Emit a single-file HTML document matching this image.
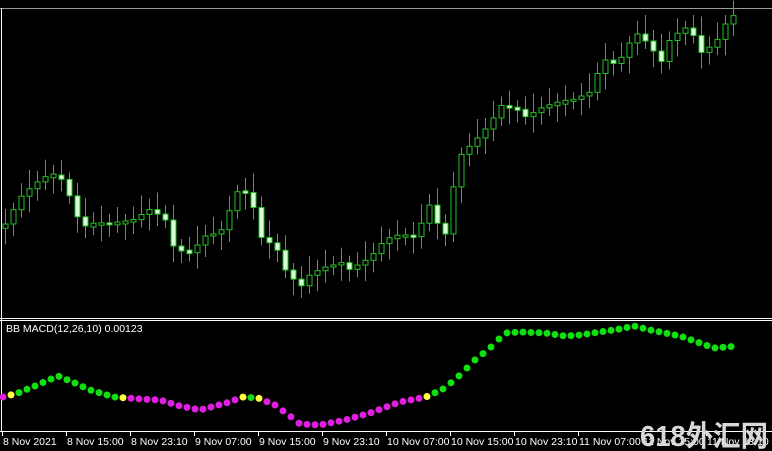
<!DOCTYPE html>
<html><head><meta charset="utf-8"><style>
html,body{margin:0;padding:0;background:#000;width:772px;height:451px;overflow:hidden}
svg{display:block}
text{font-family:"Liberation Sans",sans-serif;font-size:10.5px;fill:#fff}
</style></head><body>
<svg id="s" width="772" height="451" xmlns="http://www.w3.org/2000/svg">
<rect width="772" height="451" fill="#000"/>
<line x1="0" y1="8.5" x2="772" y2="8.5" stroke="#9a9a9a"/>
<line x1="1.5" y1="8" x2="1.5" y2="431" stroke="#fff"/>
<line x1="0" y1="318.5" x2="772" y2="318.5" stroke="#fff"/>
<line x1="0" y1="320.5" x2="772" y2="320.5" stroke="#fff"/>
<line x1="0" y1="431.5" x2="772" y2="431.5" stroke="#fff"/>
<text x="6" y="332" font-size="9.5">BB MACD(12,26,10) 0.00123</text>
<g id="c"></g><g id="d"></g><g id="t"></g>
<text x="640" y="446" textLength="128" lengthAdjust="spacingAndGlyphs" style="font-family:'Liberation Sans','Noto Sans CJK SC',sans-serif;font-size:29px;font-weight:bold;fill:#d8d8d8">618外汇网</text>
</svg>
<script>
(function(){
var NS="http://www.w3.org/2000/svg";
function el(n,a,p){var e=document.createElementNS(NS,n);for(var k in a)e.setAttribute(k,a[k]);document.getElementById(p).appendChild(e);}
function interp(k,x){for(var i=0;i<k.length-1;i++){if(x<=k[i+1][0]){var t=(x-k[i][0])/(k[i+1][0]-k[i][0]);return k[i][1]+t*(k[i+1][1]-k[i][1]);}}return k[k.length-1][1];}
var kp=[[5,220],[20,195],[35,183],[50,175],[65,185],[75,222],[95,220],[110,222],[130,222],[150,212],[165,225],[175,245],[190,250],[205,235],[220,233],[240,188],[250,205],[262,235],[275,242],[285,268],[300,287],[310,275],[325,270],[340,268],[355,262],[370,255],[385,238],[400,237],[415,240],[430,208],[445,230],[458,155],[475,140],[490,125],[500,108],[515,115],[530,110],[545,103],[560,102],[575,100],[590,95],[600,70],[610,60],[620,55],[635,30],[650,45],[660,65],[670,40],[685,32],[700,48],[715,40],[725,22],[738,10]];
var prev=interp(kp,0);
for(var x=5;x<=738;x+=8){
 var y=interp(kp,x)+((x*37)%11-5);
 var o=prev,c=y;prev=y;
 var bt=Math.min(o,c),bb=Math.max(o,c);if(bb-bt<2){bt-=1;bb+=1;}
 var wt=bt-6-((x*13)%14),wb=bb+5+((x*7)%12);
 el("line",{x1:x+0.5,y1:wt,x2:x+0.5,y2:wb,stroke:"#22c022"},"c");
 var bull=c<o;
 el("rect",{x:x-2,y:bt,width:5,height:bb-bt,fill:bull?"#000":"#d8ffd8",stroke:"#22c022","stroke-width":1},"c");
}
var dk=[[3,397],[18,393],[35,386],[58,376],[75,383],[90,390],[114,397],[140,399],[160,400],[180,406],[200,410],[230,402],[242,397],[258,398],[275,405],[290,416],[300,424],[320,425],[345,420],[370,413],[400,402],[426,397],[445,388],[460,375],[475,360],[490,348],[505,333],[520,332],[545,333],[565,336],[580,335],[600,332],[620,329],[634,326],[650,330],[680,336],[700,343],[714,348],[738,346]];
for(var x=3;x<=738;x+=8){
 var y=interp(dk,x);var col;
 if(x>=10&&x<=12)col="#ffff40";
 else if(x===3)col="#e020e0";
 else if(x>=120&&x<=124)col="#ffff40";
 else if(x>=240&&x<=244)col="#ffff40";
 else if(x>=256&&x<=260)col="#ffff40";
 else if(x>=424&&x<=428)col="#ffff40";
 else if((x>12&&x<120)||(x>=248&&x<=252)||x>428)col="#10e010";
 else col="#e020e0";
 el("circle",{cx:x,cy:y,r:3.5,fill:col},"d");
}
var labels=["8 Nov 2021","8 Nov 15:00","8 Nov 23:10","9 Nov 07:00","9 Nov 15:00","9 Nov 23:10","10 Nov 07:00","10 Nov 15:00","10 Nov 23:10","11 Nov 07:00","11 Nov 15:00","11 Nov 23:10"];
for(var i=0;i<labels.length;i++){
 var lx=2+i*64;
 el("line",{x1:lx+0.5,y1:431,x2:lx+0.5,y2:436,stroke:"#fff"},"t");
 var t=document.createElementNS(NS,"text");t.setAttribute("x",lx+1);t.setAttribute("y",445);t.textContent=labels[i];document.getElementById("t").appendChild(t);
}
})();
</script>
</body></html>
